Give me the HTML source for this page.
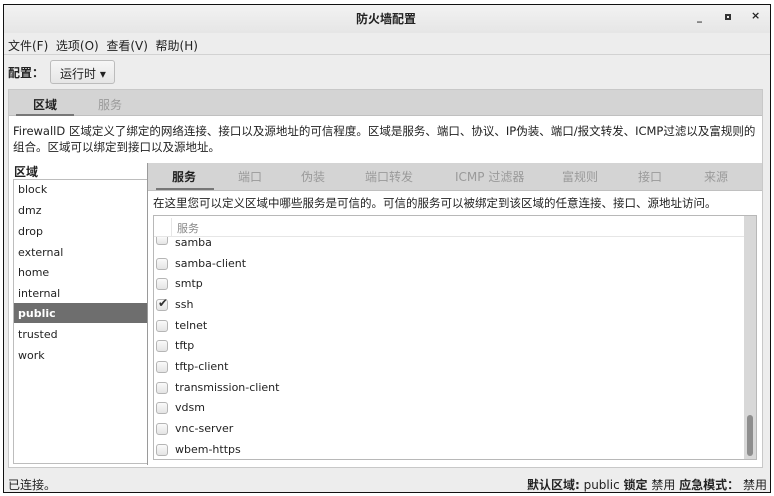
<!DOCTYPE html>
<html><head><meta charset="utf-8"><style>
*{margin:0;padding:0;box-sizing:border-box}
body{width:774px;height:496px;background:#fff;position:relative;overflow:hidden;font-family:"DejaVu Sans","Noto Sans CJK SC",sans-serif;font-size:11px;color:#222}
.a{position:absolute;white-space:nowrap}
#win{position:absolute;left:3px;top:4px;width:768px;height:489px;border:1px solid #111;background:#ededed}
#title{position:absolute;left:0;top:0;width:766px;height:28px;background:linear-gradient(#f2f2f2,#e6e6e6)}
.cb{position:absolute;left:156px;width:12px;height:12px;border:1px solid #b5b5b5;border-radius:3px;background:linear-gradient(#fafafa,#e4e4e4)}
.row{position:absolute;left:175px;font-size:11px;color:#222}
.li{position:absolute;left:18px;font-size:11px}
.tab{position:absolute;top:168px;color:#9a9a9a;font-size:12px}
</style></head><body>
<div id="win">
<div id="title"></div>
</div>
<div class="a" style="left:356px;top:10px;font-weight:bold;font-size:12px">防火墙配置</div>
<div class="a" style="left:697px;top:12px;font-size:10px;font-weight:bold">_</div>
<div class="a" style="left:725px;top:14px;width:6px;height:6px;border:2px solid #333"></div>
<div class="a" style="left:751px;top:9px;font-size:11px;font-weight:bold">×</div>
<div class="a" style="left:8px;top:37px;font-size:12px">文件(F)&nbsp;&nbsp;选项(O)&nbsp;&nbsp;查看(V)&nbsp;&nbsp;帮助(H)</div>
<div class="a" style="left:4px;top:54px;width:766px;height:1px;background:#d2d2d2"></div>
<div class="a" style="left:8px;top:64px;font-weight:bold;font-size:12px">配置：</div>
<div class="a" style="left:50px;top:60px;width:65px;height:24px;border:1px solid #bcbcbc;border-radius:3px;background:linear-gradient(#f6f6f6,#e6e6e6);padding:4px 0 0 9px;font-size:12px">运行时 ▾</div>
<div class="a" style="left:8px;top:89px;width:755px;height:379px;background:#fff;border:1px solid #c8c8c8"></div>
<div class="a" style="left:9px;top:90px;width:753px;height:26px;background:#d4d4d4;border-bottom:1px solid #c0c0c0"></div>
<div class="a" style="left:33px;top:96px;font-weight:bold;font-size:12px">区域</div>
<div class="a" style="left:98px;top:96px;color:#9a9a9a;font-size:12px">服务</div>
<div class="a" style="left:16px;top:114px;width:58px;height:2px;background:#777"></div>
<div class="a" style="left:13px;top:123px;font-size:11.5px;line-height:16px">FirewallD 区域定义了绑定的网络连接、接口以及源地址的可信程度。区域是服务、端口、协议、IP伪装、端口/报文转发、ICMP过滤以及富规则的<br>组合。区域可以绑定到接口以及源地址。</div>
<div class="a" style="left:14px;top:163px;font-weight:bold;font-size:12px">区域</div>
<div class="a" style="left:13px;top:179px;width:135px;height:285px;border:1px solid #bdbdbd;background:#fff"></div>
<div class="a" style="left:14px;top:303px;width:133px;height:20px;background:#6e6e6e"></div>
<div class="li" style="top:183px">block</div>
<div class="li" style="top:204px">dmz</div>
<div class="li" style="top:225px">drop</div>
<div class="li" style="top:246px">external</div>
<div class="li" style="top:266px">home</div>
<div class="li" style="top:287px">internal</div>
<div class="li" style="top:307px;color:#fff;font-weight:bold">public</div>
<div class="li" style="top:328px">trusted</div>
<div class="li" style="top:349px">work</div>
<div class="a" style="left:147px;top:163px;width:1px;height:302px;background:#9a9a9a"></div>
<div class="a" style="left:148px;top:163px;width:614px;height:28px;background:#d4d4d4;border-bottom:1px solid #c0c0c0"></div>
<div class="tab" style="left:172px;color:#222;font-weight:bold">服务</div>
<div class="tab" style="left:238px">端口</div>
<div class="tab" style="left:301px">伪装</div>
<div class="tab" style="left:365px">端口转发</div>
<div class="tab" style="left:455px">ICMP 过滤器</div>
<div class="tab" style="left:562px">富规则</div>
<div class="tab" style="left:638px">接口</div>
<div class="tab" style="left:704px">来源</div>
<div class="a" style="left:156px;top:188px;width:58px;height:2px;background:#777"></div>
<div class="a" style="left:153px;top:195px;font-size:11.5px">在这里您可以定义区域中哪些服务是可信的。可信的服务可以被绑定到该区域的任意连接、接口、源地址访问。</div>
<div class="a" style="left:153px;top:215px;width:604px;height:245px;border:1px solid #b8b8b8;background:#fff"></div>
<div class="a" style="left:154px;top:236px;width:590px;height:1px;background:#e6e6e6"></div>
<div class="a" style="left:171px;top:218px;width:1px;height:18px;background:#e6e6e6"></div>
<div class="a" style="left:177px;top:220px;color:#888;font-size:11px">服务</div>
<div class="a" style="left:744px;top:216px;width:12px;height:243px;background:#d8d8d8"></div>
<div class="a" style="left:747px;top:415px;width:6px;height:41px;background:#8e8e8e;border-radius:3px"></div>
<div class="cb" style="top:237px;height:8px;border-top:none;border-radius:0 0 3px 3px"></div><div class="row" style="top:236px">samba</div>
<div class="cb" style="top:258px"></div><div class="row" style="top:257px">samba-client</div>
<div class="cb" style="top:278px"></div><div class="row" style="top:277px">smtp</div>
<div class="cb" style="top:299px"></div><div class="row" style="top:298px">ssh</div>
<div class="a" style="left:158px;top:296px;font-size:12px;color:#333;font-weight:bold">✔</div>
<div class="cb" style="top:320px"></div><div class="row" style="top:319px">telnet</div>
<div class="cb" style="top:340px"></div><div class="row" style="top:339px">tftp</div>
<div class="cb" style="top:361px"></div><div class="row" style="top:360px">tftp-client</div>
<div class="cb" style="top:382px"></div><div class="row" style="top:381px">transmission-client</div>
<div class="cb" style="top:402px"></div><div class="row" style="top:401px">vdsm</div>
<div class="cb" style="top:423px"></div><div class="row" style="top:422px">vnc-server</div>
<div class="cb" style="top:444px"></div><div class="row" style="top:443px">wbem-https</div>
<div class="a" style="left:8px;top:476px;font-size:12px">已连接。</div>
<div class="a" style="right:7px;top:476px;font-size:12px"><b>默认区域:</b> public <b>锁定</b> 禁用 <b>应急模式：</b> 禁用</div>
</body></html>
